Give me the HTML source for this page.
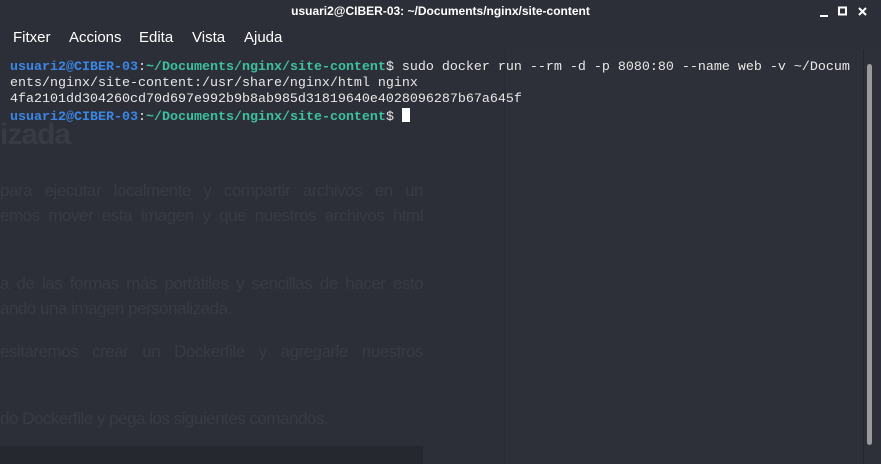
<!DOCTYPE html>
<html><head><meta charset="utf-8"><style>
*{margin:0;padding:0;box-sizing:border-box}
body{width:881px;height:464px;overflow:hidden;background:#2d2f38;position:relative;font-family:"Liberation Sans",sans-serif}
.right{position:absolute;left:504px;top:50px;width:377px;height:414px;background:#2e3039;border-left:1px solid #2a2c34}
.title{position:absolute;top:0;left:0;width:881px;height:22px;color:#fff;font-weight:bold;font-size:12px;text-align:center;line-height:22px}
.m{position:absolute;top:29px;color:#fff;font-size:15px}
.bg{position:absolute;left:0;color:#393b44;font-family:"Liberation Sans",sans-serif;font-size:17px;letter-spacing:-0.5px;width:423px;text-align:justify;text-align-last:justify;white-space:nowrap;overflow:hidden}
.bg.s{text-align-last:left;white-space:normal}
.term{position:absolute;left:10px;top:60px;font-family:"Liberation Mono",monospace;font-size:13.33px;line-height:16px;color:#e8e8e8;white-space:pre}
.u{color:#3a86e6;font-weight:bold}.p{color:#3cc0a0;font-weight:bold}
.cur{display:inline-block;width:8px;height:14px;background:#fff;vertical-align:-2px}
.code{position:absolute;left:0;top:446px;width:423px;height:18px;background:#262830}
.track{position:absolute;left:863px;top:50px;width:1px;height:414px;background:#24262d}
.thumb{position:absolute;left:867px;top:64px;width:5px;height:381px;background:#9a9a9c;border-radius:3px}
</style></head><body>
<div class="right"></div>
<div class="title">usuari2@CIBER-03: ~/Documents/nginx/site-content</div>
<svg style="position:absolute;left:818px;top:6px" width="60" height="12"><rect x="2" y="9" width="8" height="2" fill="#fff"/><rect x="21" y="1.5" width="7" height="7" fill="none" stroke="#fff" stroke-width="2"/><path d="M41 2L48 9M48 2L41 9" stroke="#fff" stroke-width="2"/></svg>
<div class="m" style="left:13px">Fitxer</div>
<div class="m" style="left:69px">Accions</div>
<div class="m" style="left:139px">Edita</div>
<div class="m" style="left:192px">Vista</div>
<div class="m" style="left:244px">Ajuda</div>
<div class="bg s" style="top:118px;font-size:30px;font-weight:bold;letter-spacing:-1px">izada</div>
<div class="bg" style="top:181px">para ejecutar localmente y compartir archivos en un</div>
<div class="bg" style="top:206px">emos mover esta imagen y que nuestros archivos html</div>
<div class="bg" style="top:274px">a de las formas más portátiles y sencillas de hacer esto</div>
<div class="bg s" style="top:299px">ando una imagen personalizada.</div>
<div class="bg" style="top:342px">esitaremos crear un Dockerfile y agregarle nuestros</div>
<div class="bg s" style="top:409px">do Dockerfile y pega los siguientes comandos.</div>
<div class="code"></div>
<div class="term"><span class="u">usuari2@CIBER-03</span>:<span class="p">~/Documents/nginx/site-content</span>$ sudo docker run --rm -d -p 8080:80 --name web -v ~/Docum
ents/nginx/site-content:/usr/share/nginx/html nginx
4fa2101dd304260cd70d697e992b9b8ab985d31819640e4028096287b67a645f
<span class="u">usuari2@CIBER-03</span>:<span class="p">~/Documents/nginx/site-content</span>$ <span class="cur"></span></div>
<div class="track"></div>
<div class="thumb"></div>
</body></html>
